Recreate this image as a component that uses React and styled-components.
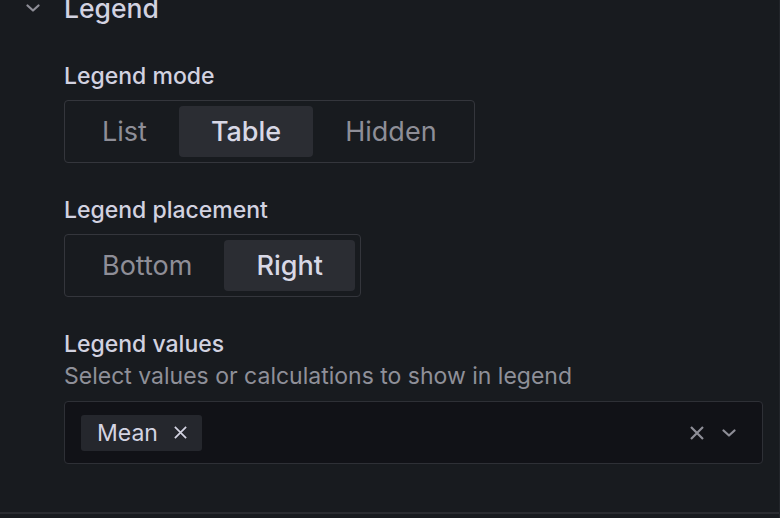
import styled, { createGlobalStyle } from "styled-components";

const GlobalStyle = createGlobalStyle`
  html, body {
    margin: 0;
    padding: 0;
    background: #181b1f;
  }
  body {
    font-family: Inter, "Noto Sans", sans-serif;
    -webkit-font-smoothing: antialiased;
  }
`;

const Pane = styled.div`
  width: 780px;
  height: 518px;
  box-sizing: border-box;
  overflow: hidden;
  background: #181b1f;
  border-right: 1px solid #22252a;
`;

const Section = styled.div`
  border-bottom: 2px solid #2a2c31;
  padding-bottom: 48px;
`;

const Header = styled.div`
  display: flex;
  align-items: center;
  gap: 24px;
  padding-left: 26px;
  margin-top: -10px;
`;

const Title = styled.div`
  font-size: 26.5px;
  line-height: 36px;
  font-weight: 500;
  color: #d2d2e0;
`;

const Body = styled.div`
  padding: 34px 16px 0 64px;
`;

const Field = styled.div`
  margin-bottom: ${(p) => (p.$last ? 0 : 31)}px;
`;

const Label = styled.div`
  font-size: 23px;
  line-height: 32px;
  font-weight: 500;
  color: #d2d2e0;
`;

const Description = styled.div`
  font-size: 23px;
  line-height: 32px;
  color: #8f9099;
`;

const RadioGroup = styled.div`
  display: inline-flex;
  margin-top: 8px;
  padding: 5px;
  border: 1px solid #34363c;
  border-radius: 4px;
`;

const RadioButton = styled.button`
  height: 51px;
  padding: 0 32px;
  border: none;
  border-radius: 4px;
  font-family: inherit;
  font-size: 27px;
  font-weight: ${(p) => (p.$active ? 500 : 400)};
  color: ${(p) => (p.$active ? "#d8d8e6" : "#8e8e97")};
  background: ${(p) => (p.$active ? "#2b2d33" : "transparent")};
  cursor: pointer;
`;

const Select = styled.div`
  display: flex;
  align-items: center;
  box-sizing: border-box;
  height: 63px;
  margin-top: 9px;
  padding: 0 26px 0 16px;
  background: #111217;
  border: 1px solid #2e3036;
  border-radius: 4px;
`;

const Tag = styled.div`
  display: flex;
  align-items: center;
  gap: 15px;
  height: 36px;
  padding: 0 14px 0 16px;
  background: #25272d;
  border-radius: 3px;
  font-size: 23px;
  color: #d4d4e2;
`;

const Spacer = styled.div`
  flex: 1;
`;

const Actions = styled.div`
  display: flex;
  align-items: center;
  gap: 17px;
  color: #8e8e97;
`;

const Cross = ({ size = 16, color = "currentColor", width = 2 }) => (
  <svg width={size} height={size} viewBox="0 0 16 16" fill="none">
    <path d="M2 2L14 14M14 2L2 14" stroke={color} strokeWidth={width} />
  </svg>
);

const Chevron = ({ w = 14, h = 8 }) => (
  <svg width={w} height={h} viewBox="0 0 14 8" fill="none">
    <path d="M1.5 1.5L7 6.5L12.5 1.5" stroke="#8e8e97" strokeWidth="2.2" strokeLinecap="round" strokeLinejoin="round" />
  </svg>
);

function Radios({ options, value }) {
  return (
    <RadioGroup>
      {options.map((o) => (
        <RadioButton key={o} $active={o === value}>
          {o}
        </RadioButton>
      ))}
    </RadioGroup>
  );
}

export default function App() {
  return (
    <Pane>
      <GlobalStyle />
      <Section>
        <Header>
          <Chevron />
          <Title>Legend</Title>
        </Header>
        <Body>
          <Field>
            <Label>Legend mode</Label>
            <Radios options={["List", "Table", "Hidden"]} value="Table" />
          </Field>
          <Field>
            <Label>Legend placement</Label>
            <Radios options={["Bottom", "Right"]} value="Right" />
          </Field>
          <Field $last>
            <Label>Legend values</Label>
            <Description>Select values or calculations to show in legend</Description>
            <Select>
              <Tag>
                Mean
                <Cross size={15} color="#d4d4e2" width={1.8} />
              </Tag>
              <Spacer />
              <Actions>
                <Cross size={16} width={2.2} />
                <Chevron />
              </Actions>
            </Select>
          </Field>
        </Body>
      </Section>
    </Pane>
  );
}
